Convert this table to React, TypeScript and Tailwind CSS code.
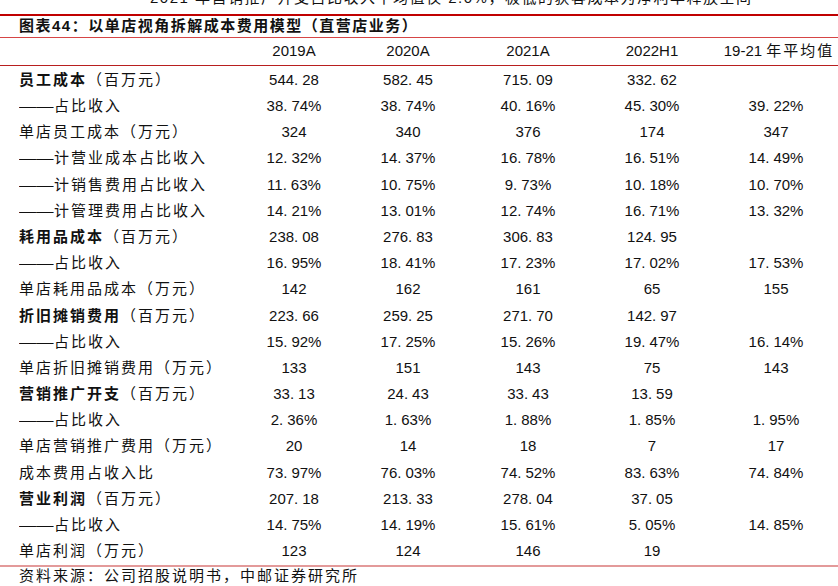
import React from "react";

const CJK = "font-['Liberation_Sans','Noto_Sans_CJK_SC',sans-serif]";

type Row = {
  bold?: string;
  label: string;
  values: string[];
};

const rows: Row[] = [
  { bold: "员工成本", label: "（百万元）", values: ["544.28", "582.45", "715.09", "332.62", ""] },
  { label: "——占比收入", values: ["38.74%", "38.74%", "40.16%", "45.30%", "39.22%"] },
  { label: "单店员工成本（万元）", values: ["324", "340", "376", "174", "347"] },
  { label: "——计营业成本占比收入", values: ["12.32%", "14.37%", "16.78%", "16.51%", "14.49%"] },
  { label: "——计销售费用占比收入", values: ["11.63%", "10.75%", "9.73%", "10.18%", "10.70%"] },
  { label: "——计管理费用占比收入", values: ["14.21%", "13.01%", "12.74%", "16.71%", "13.32%"] },
  { bold: "耗用品成本", label: "（百万元）", values: ["238.08", "276.83", "306.83", "124.95", ""] },
  { label: "——占比收入", values: ["16.95%", "18.41%", "17.23%", "17.02%", "17.53%"] },
  { label: "单店耗用品成本（万元）", values: ["142", "162", "161", "65", "155"] },
  { bold: "折旧摊销费用", label: "（百万元）", values: ["223.66", "259.25", "271.70", "142.97", ""] },
  { label: "——占比收入", values: ["15.92%", "17.25%", "15.26%", "19.47%", "16.14%"] },
  { label: "单店折旧摊销费用（万元）", values: ["133", "151", "143", "75", "143"] },
  { bold: "营销推广开支", label: "（百万元）", values: ["33.13", "24.43", "33.43", "13.59", ""] },
  { label: "——占比收入", values: ["2.36%", "1.63%", "1.88%", "1.85%", "1.95%"] },
  { label: "单店营销推广费用（万元）", values: ["20", "14", "18", "7", "17"] },
  { label: "成本费用占收入比", values: ["73.97%", "76.03%", "74.52%", "83.63%", "74.84%"] },
  { bold: "营业利润", label: "（百万元）", values: ["207.18", "213.33", "278.04", "37.05", ""] },
  { label: "——占比收入", values: ["14.75%", "14.19%", "15.61%", "5.05%", "14.85%"] },
  { label: "单店利润（万元）", values: ["123", "124", "146", "19", ""] },
];

const headers = ["2019A", "2020A", "2021A", "2022H1"];

// numbers in the source render the decimal point in a wide slot
function Num({ v }: { v: string }) {
  if (!v.includes(".")) return <>{v}</>;
  const [a, b] = v.split(".");
  return (
    <>
      {a}
      <span className="mr-[4px]">.</span>
      {b}
    </>
  );
}

function Label({ r }: { r: Row }) {
  if (r.label.startsWith("——")) {
    return (
      <>
        <span className="inline-block w-[35px] tracking-normal origin-left scale-x-[1.15]">——</span>
        {r.label.slice(2)}
      </>
    );
  }
  return (
    <>
      {r.bold && <span className="font-bold">{r.bold}</span>}
      {r.label}
    </>
  );
}

const grid = "grid grid-cols-[238px_112px_116px_124px_124px_124px] items-center";

export default function App() {
  return (
    <div className={`w-[838px] h-[586px] bg-white overflow-hidden text-[#111] text-[15px] tracking-[2px] ${CJK}`}>
      <div className="h-[14px] overflow-hidden">
        <p className="-mt-[12px] pl-[150px] whitespace-nowrap leading-[20px] tracking-[1.5px]">
          2021 年营销推广开支占比收入平均值仅 2.0%，极低的获客成本为净利率释放空间
        </p>
      </div>
      <div className="h-[2px] bg-[#c00000]" />
      <div className="h-[21px] flex items-center pl-[19px] font-bold whitespace-nowrap tracking-[1.5px]">
        图表44：以单店视角拆解成本费用模型（直营店业务）
      </div>
      <div className="h-px bg-[#d64545]" />
      <div className={`${grid} h-[27px]`}>
        <div />
        {headers.map((h) => (
          <div key={h} className="text-center tracking-normal whitespace-nowrap">
            {h}
          </div>
        ))}
        <div className="text-center whitespace-nowrap pl-[6px]">
          <span className="tracking-normal">19-21 </span>年平均值
        </div>
      </div>
      <div className="h-px bg-[#b81f1f]" />
      <div className="pt-[1px]">
        {rows.map((r, i) => (
          <div key={i} className={`${grid} h-[26.2px]`}>
            <div className="pl-[19px] whitespace-nowrap">
              <Label r={r} />
            </div>
            {r.values.map((v, j) => (
              <div key={j} className="text-center tracking-normal whitespace-nowrap">
                <Num v={v} />
              </div>
            ))}
          </div>
        ))}
      </div>
      <div className="h-[2px] bg-[#e39a9a]" />
      <div className="pl-[19px] leading-[18px] whitespace-nowrap">
        资料来源：公司招股说明书，中邮证券研究所
      </div>
    </div>
  );
}
